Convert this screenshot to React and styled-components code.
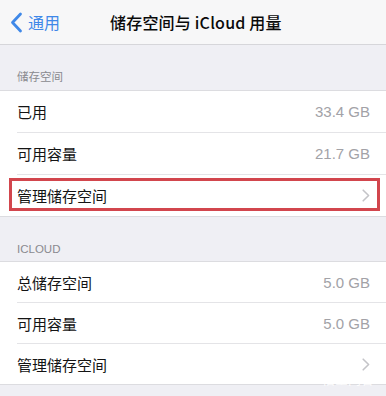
import React from 'react'
import styled, { createGlobalStyle } from 'styled-components'

const GlobalStyle = createGlobalStyle`
  body {
    margin: 0;
    background: #efeff4;
    font-family: "Noto Sans CJK SC", "Noto Sans", sans-serif;
    -webkit-font-smoothing: antialiased;
  }
`

const Page = styled.div`
  width: 386px;
  height: 396px;
  overflow: hidden;
  background: #efeff4;
  position: relative;
`

const NavBar = styled.header`
  height: 44px;
  display: flex;
  align-items: center;
  position: relative;
  background: #f7f7f8;
  border-bottom: 1px solid #d6d6da;
`

const Back = styled.div`
  display: flex;
  align-items: center;
  gap: 5px;
  padding-left: 10px;
  color: #3f88e8;
  font-size: 16px;
`

const Title = styled.h1`
  position: absolute;
  left: 110px;
  margin: 0;
  font-size: 16px;
  font-weight: 500;
  color: #0a0a0a;
  letter-spacing: 0.2px;
`

const SectionHeader = styled.div`
  height: ${p => p.$h}px;
  box-sizing: border-box;
  display: flex;
  align-items: flex-end;
  padding: 0 0 6px 17px;
  font-size: 11.5px;
  color: #8a8a8f;
  font-family: ${p => p.$latin ? '"Liberation Sans", Arial, sans-serif' : 'inherit'};
`

const Group = styled.div`
  background: #fff;
  border-top: 1px solid #dcdce0;
  border-bottom: 1px solid #dcdce0;
`

const Row = styled.div`
  position: relative;
  padding-left: 17px;

  ${p => p.$marked && `
    &::after {
      content: '';
      position: absolute;
      left: 9px;
      right: 6px;
      top: 3px;
      bottom: 5px;
      border: 3px solid #d2464d;
    }
  `}
`

const RowInner = styled.div`
  height: ${p => p.$h}px;
  display: flex;
  align-items: center;
  justify-content: space-between;
  padding-right: 16px;
  border-bottom: ${p => p.$last ? 'none' : '1px solid #e4e4e7'};
`

const Label = styled.span`
  font-size: 15px;
  color: #141414;
`

const Value = styled.span`
  font-family: "Liberation Sans", Arial, sans-serif;
  font-size: 15px;
  color: #a2a2a7;
`

const Watermark = styled.div`
  position: absolute;
  right: 12px;
  bottom: 8px;
  font-size: 13px;
  color: rgba(255, 255, 255, 0.9);
`

const Chevron = ({ color = '#c4c4c8', w = 8, h = 13, sw = 1.6 }) => (
  <svg width={w} height={h} viewBox="0 0 8 13" fill="none">
    <path d="M1.2 1.2 L6.6 6.5 L1.2 11.8" stroke={color} strokeWidth={sw} strokeLinecap="round" strokeLinejoin="round" />
  </svg>
)

const BackChevron = () => (
  <svg width="13" height="21" viewBox="0 0 13 21" fill="none">
    <path d="M10.5 2 L2.5 10.5 L10.5 19" stroke="#3f88e8" strokeWidth="2.8" strokeLinecap="round" strokeLinejoin="round" />
  </svg>
)

const groups = [
  {
    title: '储存空间',
    headerH: 45,
    rowH: 41,
    rows: [
      { label: '已用', value: '33.4 GB' },
      { label: '可用容量', value: '21.7 GB' },
      { label: '管理储存空间', chevron: true, marked: true }
    ]
  },
  {
    title: 'ICLOUD',
    latin: true,
    headerH: 44,
    rowH: 40,
    rows: [
      { label: '总储存空间', value: '5.0 GB' },
      { label: '可用容量', value: '5.0 GB' },
      { label: '管理储存空间', chevron: true }
    ]
  }
]

export default function App () {
  return (
    <Page>
      <GlobalStyle />
      <NavBar>
        <Back>
          <BackChevron />
          <span>通用</span>
        </Back>
        <Title>储存空间与 iCloud 用量</Title>
      </NavBar>
      {groups.map(g => (
        <section key={g.title}>
          <SectionHeader $h={g.headerH} $latin={g.latin}>{g.title}</SectionHeader>
          <Group>
            {g.rows.map((r, i) => (
              <Row key={i} $marked={r.marked}>
                <RowInner $h={g.rowH} $last={i === g.rows.length - 1}>
                  <Label>{r.label}</Label>
                  {r.chevron ? <Chevron /> : <Value>{r.value}</Value>}
                </RowInner>
              </Row>
            ))}
          </Group>
        </section>
      ))}
      <Watermark>悟空问答</Watermark>
    </Page>
  )
}
